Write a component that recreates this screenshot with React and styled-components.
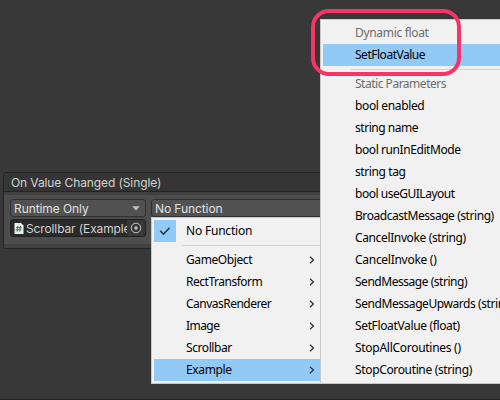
import React from 'react';
import styled, { createGlobalStyle } from 'styled-components';

const Global = createGlobalStyle`
  * { box-sizing: border-box; }
  body { margin: 0; background: #383838; overflow: hidden; }
`;

const Screen = styled.main`
  position: relative;
  width: 500px;
  height: 400px;
  padding: 172px 0 0 3px;
  overflow: hidden;
  background: #383838;
  border-bottom: 1px solid #242424;
  font-family: Inter, sans-serif;
  font-size: 12px;
  color: #d2d2d2;
`;

const EventPanel = styled.section`
  height: 77px;
  border: 1px solid #242424;
  border-radius: 3px 0 0 3px;
  background: #414141;
`;

const PanelHeader = styled.header`
  height: 19px;
  padding-left: 7px;
  border-bottom: 1px solid #242424;
  background: #353535;
  line-height: 20px;
  letter-spacing: ${(p) => p.$tracking};
  white-space: nowrap;
`;

const PanelBody = styled.div`
  display: grid;
  grid-template-columns: 136px 1fr;
  grid-template-rows: 18px 18px;
  gap: 2px 5px;
  height: 49px;
  margin-top: 3px;
  padding: 4px 0 0 6px;
  background: #4d4d4d;
`;

const Dropdown = styled.div`
  display: flex;
  align-items: center;
  justify-content: space-between;
  padding: 0 5px 0 3px;
  border: 1px solid #303030;
  border-radius: 3px;
  background: #515151;
  color: #e0e0e0;
  white-space: nowrap;
  letter-spacing: -0.08px;
`;

const ObjectField = styled.div`
  display: flex;
  align-items: center;
  padding-left: 3px;
  border: 1px solid #212121;
  border-radius: 3px;
  background: #2a2a2a;
  overflow: hidden;
`;

const ObjectName = styled.span`
  flex: 1;
  min-width: 0;
  margin-left: 2px;
  overflow: hidden;
  white-space: nowrap;
  letter-spacing: ${(p) => p.$tracking};
`;

const Picker = styled.span`
  display: flex;
  flex: none;
  align-items: center;
  justify-content: center;
  width: 18px;
  height: 16px;
  background: #373737;
`;

const Menu = styled.div`
  position: absolute;
  left: ${(p) => p.$left}px;
  top: ${(p) => p.$top}px;
  width: ${(p) => p.$width}px;
  padding: 2px 0 2px 2px;
  border: 1px solid #c8c8c8;
  border-right: 0;
  background: #f1f1f1;
  color: #000;
  font-family: "Noto Sans", sans-serif;
  font-size: 12px;
`;

const MenuItem = styled.div`
  display: grid;
  grid-template-columns: 22px 1fr 11px;
  align-items: center;
  height: 22px;
  background: ${(p) => (p.$active ? '#91c9f7' : 'transparent')};
  color: ${(p) => (p.$muted ? '#6d6d6d' : '#000')};
`;

const CheckCell = styled.span`
  display: flex;
  align-items: center;
  justify-content: center;
  height: 22px;
  background: ${(p) => (p.$on ? '#91c9f7' : 'transparent')};
`;

const ItemLabel = styled.span`
  padding-left: 10px;
  line-height: 22px;
  white-space: nowrap;
  letter-spacing: ${(p) => p.$tracking}px;
`;

const Separator = styled.div`
  height: 1px;
  margin: 3px 0 3px 28px;
  background: #d2d2d2;
`;

const Highlight = styled.div`
  position: absolute;
  left: 311px;
  top: 9px;
  width: 150px;
  height: 67px;
  border: 4px solid #f73468;
  border-radius: 18px;
`;

const CheckIcon = () => (
  <svg width="12" height="10" viewBox="0 0 12 10" fill="none">
    <path d="M1.2 4.8 4.5 8 10.6 1.8" stroke="#2b3b4b" strokeWidth="1.6" />
  </svg>
);

const ChevronIcon = () => (
  <svg width="6" height="8" viewBox="0 0 6 8" fill="none">
    <path d="M1 .7 4.4 4 1 7.3" stroke="#333" strokeWidth="1.3" />
  </svg>
);

const ArrowIcon = () => (
  <svg width="8" height="5" viewBox="0 0 8 5">
    <path d="M.3.3h7.4L4 4.6z" fill="#c4c4c4" />
  </svg>
);

const ScriptIcon = () => (
  <svg width="10" height="11" viewBox="0 0 10 11">
    <path d="M.5 0H7l2.5 2.5V11H.5z" fill="#f0f0f0" />
    <path d="M3.9 2.8 3.1 8.6M6.5 2.8 5.7 8.6M2 4.6h5.8M1.7 6.8h5.8" stroke="#3c7d4b" strokeWidth="1" />
  </svg>
);

const TargetIcon = () => (
  <svg width="12" height="12" viewBox="0 0 12 12">
    <circle cx="6" cy="6" r="4.8" fill="none" stroke="#c4c4c4" />
    <circle cx="6" cy="6" r="1.7" fill="#c4c4c4" />
  </svg>
);

const SEP = { separator: true };

const targets = [
  { label: 'No Function', checked: true, tracking: -0.2 },
  SEP,
  { label: 'GameObject', sub: true, tracking: -0.4 },
  { label: 'RectTransform', sub: true, tracking: -0.48 },
  { label: 'CanvasRenderer', sub: true, tracking: -0.52 },
  { label: 'Image', sub: true, tracking: -0.55 },
  { label: 'Scrollbar', sub: true, tracking: -0.42 },
  { label: 'Example', sub: true, active: true, tracking: -0.35 },
];

const methods = [
  { label: 'Dynamic float', muted: true, tracking: -0.32 },
  { label: 'SetFloatValue', active: true, tracking: -0.48 },
  SEP,
  { label: 'Static Parameters', muted: true, tracking: -0.48 },
  { label: 'bool enabled', tracking: -0.36 },
  { label: 'string name', tracking: -0.46 },
  { label: 'bool runInEditMode', tracking: -0.42 },
  { label: 'string tag', tracking: -0.4 },
  { label: 'bool useGUILayout', tracking: -0.48 },
  { label: 'BroadcastMessage (string)', tracking: -0.44 },
  { label: 'CancelInvoke (string)', tracking: -0.37 },
  { label: 'CancelInvoke ()', tracking: -0.28 },
  { label: 'SendMessage (string)', tracking: -0.47 },
  { label: 'SendMessageUpwards (string)', tracking: -0.43 },
  { label: 'SetFloatValue (float)', tracking: -0.36 },
  { label: 'StopAllCoroutines ()', tracking: -0.28 },
  { label: 'StopCoroutine (string)', tracking: -0.35 },
];

const renderItem = (item, i) =>
  item.separator ? (
    <Separator key={i} />
  ) : (
    <MenuItem key={i} $active={item.active} $muted={item.muted}>
      <CheckCell $on={item.checked}>{item.checked && <CheckIcon />}</CheckCell>
      <ItemLabel $tracking={item.tracking}>{item.label}</ItemLabel>
      {item.sub && <ChevronIcon />}
    </MenuItem>
  );

export default function App() {
  return (
    <>
      <Global />
      <Screen>
        <EventPanel>
          <PanelHeader $tracking="-0.1px">On Value Changed (Single)</PanelHeader>
          <PanelBody>
            <Dropdown>
              Runtime Only
              <ArrowIcon />
            </Dropdown>
            <Dropdown>No Function</Dropdown>
            <ObjectField>
              <ScriptIcon />
              <ObjectName $tracking="-0.12px">Scrollbar (Example</ObjectName>
              <Picker>
                <TargetIcon />
              </Picker>
            </ObjectField>
          </PanelBody>
        </EventPanel>
        <Menu $left={151} $top={217} $width={169}>
          {targets.map(renderItem)}
        </Menu>
        <Menu $left={320} $top={19} $width={180}>
          {methods.map(renderItem)}
        </Menu>
        <Highlight />
      </Screen>
    </>
  );
}
